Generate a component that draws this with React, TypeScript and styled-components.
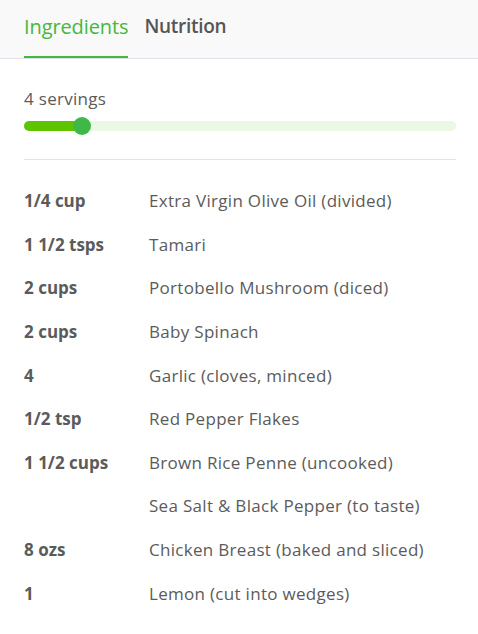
import React from 'react';
import styled, { createGlobalStyle } from 'styled-components';

const GlobalStyle = createGlobalStyle`
  html, body {
    margin: 0;
    padding: 0;
    background: #ffffff;
  }
  body {
    font-family: "Open Sans", Lato, sans-serif;
    color: #5b5b5b;
  }
`

const Panel = styled.div`
  width: 478px;
  height: 634px;
  background: #ffffff;
  overflow: hidden;
`
const TabBar = styled.div`
  display: flex;
  gap: 16px;
  height: 58px;
  padding: 0 24px;
  background: #f9f9f9;
  border-bottom: 1px solid #dfe3ec;
`
const Tab = styled.div<{ $active?: boolean }>`
  display: flex;
  align-items: center;
  height: 100%;
  box-sizing: border-box;
  padding-bottom: 4px;
  font-size: ${p => (p.$active ? '20px' : '19px')};
  font-weight: ${p => (p.$active ? 500 : 600)};
  letter-spacing: ${p => (p.$active ? '-0.1px' : '-0.3px')};
  color: ${p => (p.$active ? '#46b83c' : '#555555')};
  border-bottom: 2px solid ${p => (p.$active ? '#46b83c' : 'transparent')};
  margin-bottom: -1px;
`
const Body = styled.div`
  padding: 0 22px 0 24px;
`
const Servings = styled.div`
  padding-top: 30px;
  padding-bottom: 28px;
  border-bottom: 1px solid #dfe3ec;
`
const ServingsLabel = styled.div`
  font-size: 17px;
  letter-spacing: 0.3px;
  line-height: 20px;
  color: #5b5b5b;
  margin-bottom: 12px;
`
const Track = styled.div`
  position: relative;
  height: 10px;
  border-radius: 5px;
  background: #ebf8e4;
`
const Fill = styled.div`
  height: 100%;
  border-radius: 5px;
  background: #5ec400;
`
const Thumb = styled.div`
  position: absolute;
  top: 50%;
  width: 18px;
  height: 18px;
  margin: -9px 0 0 -9px;
  border-radius: 50%;
  background: #3fb847;
`
const List = styled.div`
  display: flex;
  flex-direction: column;
  padding-top: 19px;
`
const Row = styled.div`
  display: grid;
  grid-template-columns: 125px 1fr;
  height: 43.6px;
  align-items: center;
  font-size: 17px;
`
const Qty = styled.div`
  font-weight: 700;
  color: #5b5b5b;
`
const Name = styled.div`
  color: #5b5b5b;
  letter-spacing: 0.3px;
`

const ingredients: [string, string][] = [
  ['1/4 cup', 'Extra Virgin Olive Oil (divided)'],
  ['1 1/2 tsps', 'Tamari'],
  ['2 cups', 'Portobello Mushroom (diced)'],
  ['2 cups', 'Baby Spinach'],
  ['4', 'Garlic (cloves, minced)'],
  ['1/2 tsp', 'Red Pepper Flakes'],
  ['1 1/2 cups', 'Brown Rice Penne (uncooked)'],
  ['', 'Sea Salt & Black Pepper (to taste)'],
  ['8 ozs', 'Chicken Breast (baked and sliced)'],
  ['1', 'Lemon (cut into wedges)'],
];

export default function App() {
  const pct = 13.5;
  return (
    <Panel>
      <GlobalStyle />
      <TabBar>
        <Tab $active>Ingredients</Tab>
        <Tab>Nutrition</Tab>
      </TabBar>
      <Body>
        <Servings>
          <ServingsLabel>4 servings</ServingsLabel>
          <Track>
            <Fill style={{ width: `${pct}%` }} />
            <Thumb style={{ left: `${pct}%` }} />
          </Track>
        </Servings>
        <List>
          {ingredients.map(([q, n], i) => (
            <Row key={i}>
              <Qty>{q}</Qty>
              <Name>{n}</Name>
            </Row>
          ))}
        </List>
      </Body>
    </Panel>
  );
}
